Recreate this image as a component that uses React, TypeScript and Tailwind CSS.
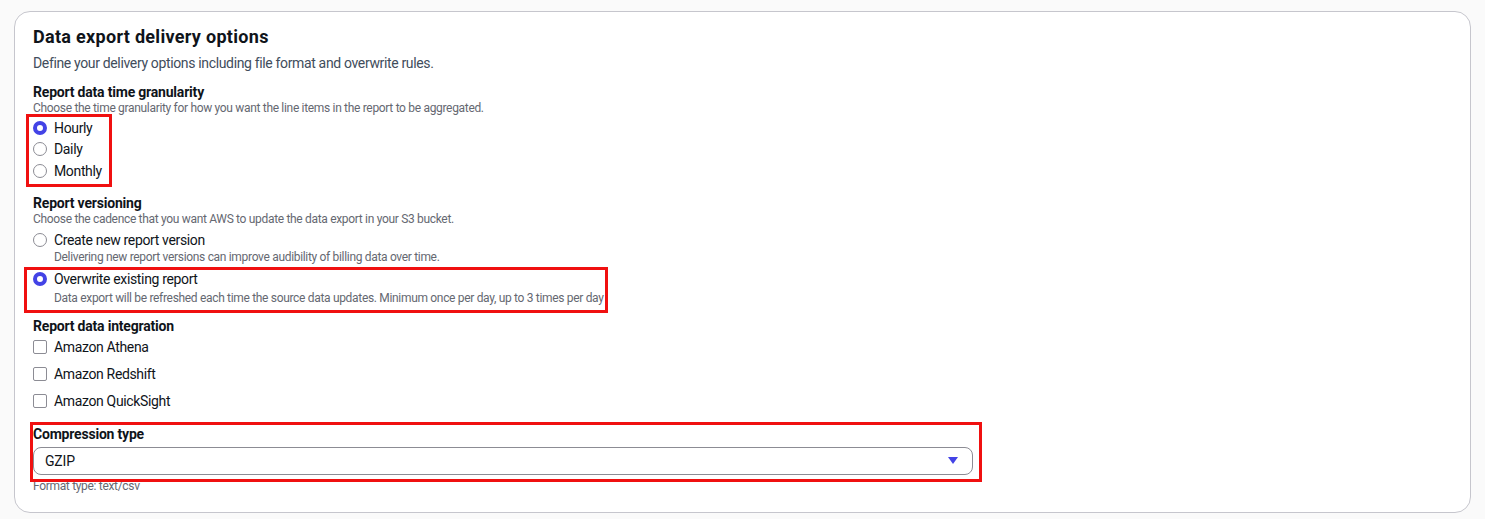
import type { ReactNode } from "react";

const font = { fontFamily: 'Roboto, "Liberation Sans", sans-serif' };

function Radio({ checked }: { checked?: boolean }) {
  return checked ? (
    <span className="box-border inline-block h-[14px] w-[14px] shrink-0 rounded-full border-[4px] border-[#4343e6] bg-white" />
  ) : (
    <span className="box-border inline-block h-[14px] w-[14px] shrink-0 rounded-full border border-[#8c8c94] bg-white" />
  );
}

function Checkbox() {
  return (
    <span className="box-border inline-block h-[14px] w-[14px] shrink-0 rounded-[2px] border border-[#8c8c94] bg-white" />
  );
}

function RadioRow({ label, checked }: { label: string; checked?: boolean }) {
  return (
    <div className="flex h-[21.5px] items-center gap-[7px]">
      <Radio checked={checked} />
      <span className="text-[14px] leading-[20px] tracking-[-0.35px] text-[#0f141a]">{label}</span>
    </div>
  );
}

function FieldLabel({ children, className = "" }: { children: ReactNode; className?: string }) {
  return (
    <div className={"text-[14px] font-bold leading-[18px] tracking-[-0.2px] text-[#0f141a] " + className}>
      {children}
    </div>
  );
}

function Helper({ children, className = "" }: { children: ReactNode; className?: string }) {
  return (
    <div className={"text-[12px] leading-[14px] tracking-[-0.32px] text-[#656871] " + className}>{children}</div>
  );
}

export default function App() {
  return (
    <div className="min-h-[519px] bg-[#fafafa] px-[14px] pt-[11px] pb-[7px]" style={font}>
      <div className="w-[1457px] rounded-[16px] border border-[#c6c6cd] bg-white px-[18px] pt-[14px] pb-[19px]">
        <h2 className="text-[18px] font-bold leading-[22px] tracking-[0.3px] text-[#0f141a]">
          Data export delivery options
        </h2>
        <p className="mt-[5px] text-[14px] leading-[20px] tracking-[-0.35px] text-[#414d5c]">
          Define your delivery options including file format and overwrite rules.
        </p>

        <FieldLabel className="mt-[10px]">Report data time granularity</FieldLabel>
        <Helper>Choose the time granularity for how you want the line items in the report to be aggregated.</Helper>
        <div className="relative mt-[2px] w-fit">
          <span className="pointer-events-none absolute top-[-3px] left-[-7px] h-[73px] w-[86px] border-[3px] border-[#f01010]" />
          <RadioRow label="Hourly" checked />
          <RadioRow label="Daily" />
          <RadioRow label="Monthly" />
        </div>

        <FieldLabel className="mt-[12px]">Report versioning</FieldLabel>
        <Helper>Choose the cadence that you want AWS to update the data export in your S3 bucket.</Helper>
        <div className="mt-[4px] flex gap-[7px]">
          <div className="flex h-[20px] items-center">
            <Radio />
          </div>
          <div>
            <div className="text-[14px] leading-[20px] tracking-[-0.35px] text-[#0f141a]">Create new report version</div>
            <Helper>Delivering new report versions can improve audibility of billing data over time.</Helper>
          </div>
        </div>
        <div className="relative mt-[5px] flex w-fit gap-[7px]">
          <span className="pointer-events-none absolute top-[-2px] left-[-9px] h-[46px] w-[584px] border-[3px] border-[#f01010]" />
          <div className="flex h-[20px] items-center">
            <Radio checked />
          </div>
          <div>
            <div className="text-[14px] leading-[20px] tracking-[-0.35px] text-[#0f141a]">Overwrite existing report</div>
            <Helper className="mt-[2px]">
              Data export will be refreshed each time the source data updates. Minimum once per day, up to 3 times per day
            </Helper>
          </div>
        </div>

        <FieldLabel className="mt-[12px]">Report data integration</FieldLabel>
        <div className="flex flex-col gap-[3px]">
          {["Amazon Athena", "Amazon Redshift", "Amazon QuickSight"].map((name) => (
            <div key={name} className="flex h-[24px] items-center gap-[7px]">
              <Checkbox />
              <span className="text-[14px] leading-[20px] tracking-[-0.35px] text-[#0f141a]">{name}</span>
            </div>
          ))}
        </div>

        <div className="relative mt-[12px]">
          <span className="pointer-events-none absolute top-[-3px] left-[-3px] h-[60px] w-[952px] border-[3px] border-[#f01010]" />
          <FieldLabel>Compression type</FieldLabel>
          <div className="mt-[4px] flex h-[28px] w-[940px] items-center justify-between rounded-[8px] border border-[#8c8c94] bg-white pr-[14px] pl-[11px]">
            <span className="text-[14px] leading-[20px] tracking-[-0.2px] text-[#0f141a]">GZIP</span>
            <svg width="10" height="7" viewBox="0 0 10 7" aria-hidden="true">
              <path d="M0 0h10L5 7z" fill="#4343e6" />
            </svg>
          </div>
          <Helper className="mt-[4px]">Format type: text/csv</Helper>
        </div>
      </div>
    </div>
  );
}
